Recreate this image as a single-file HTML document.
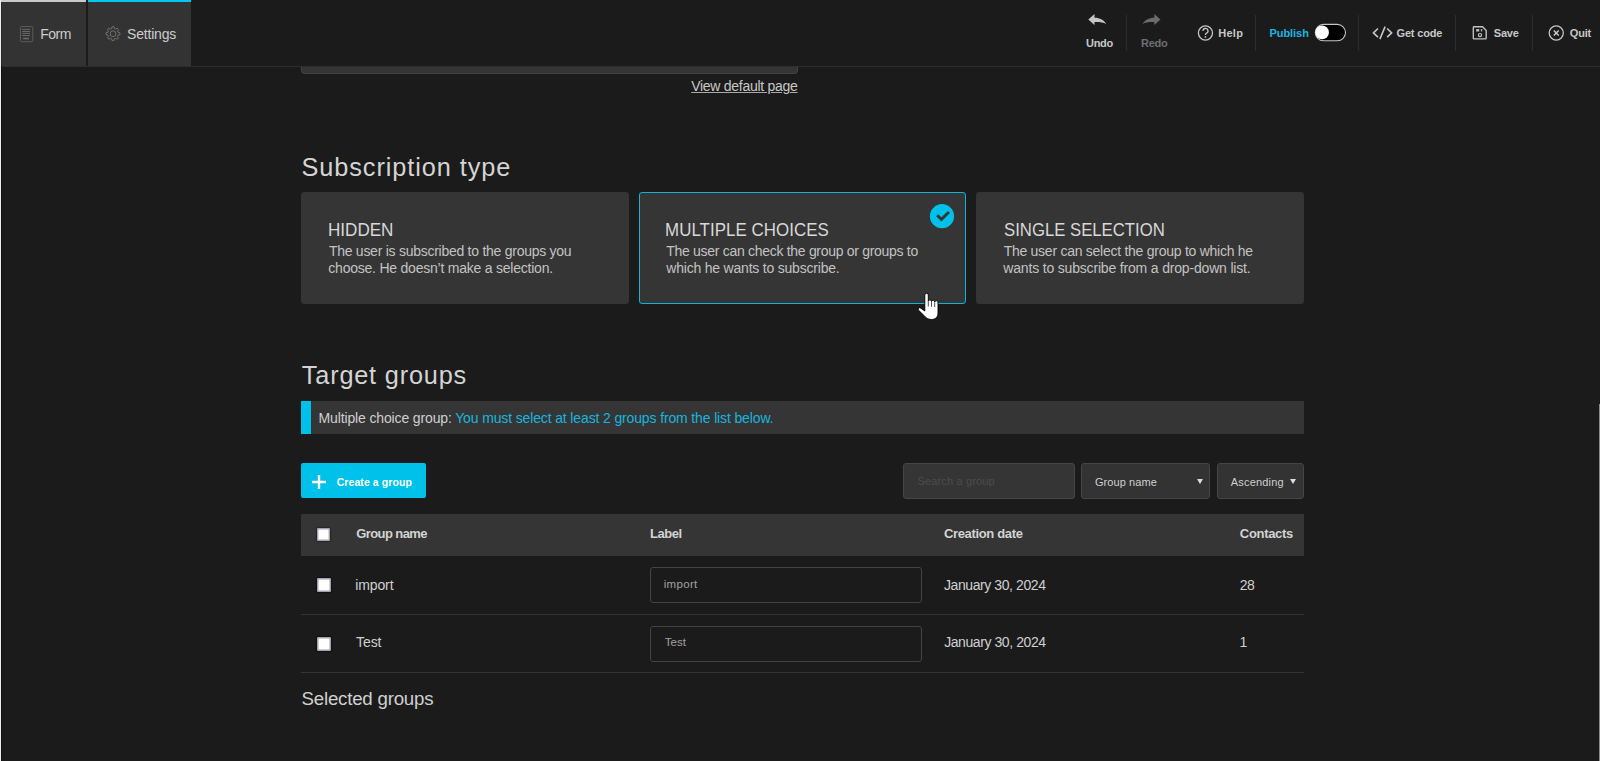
<!DOCTYPE html>
<html><head><meta charset="utf-8">
<style>
*{box-sizing:border-box;margin:0;padding:0}
html,body{width:1600px;height:761px;overflow:hidden;background:#1b1b1b;font-family:"Liberation Sans",sans-serif;color:#cfcfcf}
.a{position:absolute;white-space:nowrap}
</style></head><body>
<div class="a" style="left:0;top:0;width:1600px;height:67px;background:#1b1b1b;border-bottom:1px solid #2e2e2e"></div>
<!-- tabs -->
<div class="a" style="left:1px;top:0;width:85px;height:66px;background:#333;border-top:2px solid #c9c9c9"></div>
<div class="a" style="left:88px;top:0;width:103px;height:66px;background:#333;border-top:2px solid #00c8f0"></div>
<svg class="a" style="left:19px;top:25px" width="15" height="18" viewBox="0 0 15 18"><rect x="1.5" y="1.6" width="12.3" height="15.1" rx="1" fill="none" stroke="#5c5c5c" stroke-width="1"/><path d="M3.2 4.4h7.9M3.2 6.5h7.9M3.2 8.4h7.9M3.2 10.5h7.9" stroke="#6e6e6e" stroke-width="0.9"/><rect x="4.1" y="12.7" width="5.9" height="1.6" fill="#6a6a6a"/></svg>
<svg class="a" style="left:105px;top:26px" width="16" height="16" viewBox="0 0 16 16"><g transform="translate(0,-0.3)"><path d="M6.68 2.87 L7.07 1.06 L8.93 1.06 L9.32 2.87 L10.70 3.44 L12.25 2.44 L13.56 3.75 L12.56 5.30 L13.13 6.68 L14.94 7.07 L14.94 8.93 L13.13 9.32 L12.56 10.70 L13.56 12.25 L12.25 13.56 L10.70 12.56 L9.32 13.13 L8.93 14.94 L7.07 14.94 L6.68 13.13 L5.30 12.56 L3.75 13.56 L2.44 12.25 L3.44 10.70 L2.87 9.32 L1.06 8.93 L1.06 7.07 L2.87 6.68 L3.44 5.30 L2.44 3.75 L3.75 2.44 L5.30 3.44Z" fill="none" stroke="#727272" stroke-width="1" stroke-linejoin="round"/><circle cx="8" cy="8" r="2.9" fill="none" stroke="#727272" stroke-width="1"/></g></svg>
<!-- toolbar -->
<svg class="a" style="left:1084px;top:10px" width="26" height="18" viewBox="1084 10 26 18"><path d="M1088.3 19.6L1094.5 14.1V17.8C1100 17.8 1104 20 1106.4 24.2C1103.5 22.3 1099.5 22 1094.5 22.1V25.1Z" fill="#c6c6c6"/></svg>
<div class="a" style="left:1126px;top:15px;width:1px;height:36px;background:#2c2c2c"></div>
<svg class="a" style="left:1139px;top:10px" width="26" height="18" viewBox="1139 10 26 18"><path d="M1160.5 19.6L1154.3 14.1V17.8C1148.8 17.8 1144.8 20 1142.4 24.2C1145.3 22.3 1149.3 22 1154.3 22.1V25.1Z" fill="#6b6b6b"/></svg>
<svg class="a" style="left:1193px;top:22px" width="24" height="22" viewBox="1193 22 24 22"><circle cx="1205.45" cy="33" r="7.05" fill="none" stroke="#c4c4c4" stroke-width="1.3"/><path d="M1203 31A2.5 2.5 0 1 1 1206.6 33.2C1205.8 33.6 1205.45 34 1205.45 35" fill="none" stroke="#c4c4c4" stroke-width="1.3"/><circle cx="1205.45" cy="36.9" r="0.85" fill="#c4c4c4"/></svg>
<div class="a" style="left:1255px;top:15px;width:1px;height:36px;background:#2c2c2c"></div>
<svg class="a" style="left:1313px;top:23px" width="35" height="20" viewBox="0 0 35 20"><rect x="2.3" y="1.4" width="30.2" height="16.4" rx="8.2" fill="#000" stroke="#c4c4c4" stroke-width="1.1"/><circle cx="9.1" cy="9.4" r="6.8" fill="#fff"/></svg>
<div class="a" style="left:1358px;top:15px;width:1px;height:36px;background:#2c2c2c"></div>
<svg class="a" style="left:1368px;top:22px" width="28" height="22" viewBox="1368 22 28 22"><path d="M1378 28.5L1373.4 32.8L1378 37.2M1387.1 28.5L1391.7 32.8L1387.1 37.2M1385.1 26.6L1379.9 39.1" fill="none" stroke="#c6c6c6" stroke-width="1.6" stroke-linejoin="round"/></svg>
<div class="a" style="left:1455px;top:15px;width:1px;height:36px;background:#2c2c2c"></div>
<svg class="a" style="left:1468px;top:22px" width="24" height="22" viewBox="1468 22 24 22"><path d="M1474 26.7H1482.6L1486.2 30.6V38.2A0.7 0.7 0 0 1 1485.5 38.9H1474A0.7 0.7 0 0 1 1473.3 38.2V27.4A0.7 0.7 0 0 1 1474 26.7Z" fill="none" stroke="#c2c2c2" stroke-width="1.35"/><rect x="1476.2" y="29.1" width="3" height="2.4" fill="#c2c2c2"/><rect x="1480.8" y="29.1" width="1.5" height="2.3" fill="#b0b0b0"/><circle cx="1480" cy="35.1" r="1.6" fill="none" stroke="#c2c2c2" stroke-width="1.2"/></svg>
<div class="a" style="left:1532px;top:15px;width:1px;height:36px;background:#2c2c2c"></div>
<svg class="a" style="left:1544px;top:22px" width="24" height="22" viewBox="1544 22 24 22"><circle cx="1556.25" cy="33" r="7.05" fill="none" stroke="#c4c4c4" stroke-width="1.3"/><path d="M1553.8 30.55L1558.7 35.45M1558.7 30.55L1553.8 35.45" stroke="#c8c8c8" stroke-width="1.5"/></svg>
<!-- edges -->
<div class="a" style="left:0;top:0;width:1px;height:761px;background:#eeeeee"></div>
<div class="a" style="left:1px;top:2px;width:1px;height:64px;background:#2a2a2a"></div><div class="a" style="left:1px;top:66px;width:1px;height:695px;background:#111"></div>
<div class="a" style="left:1599px;top:404px;width:1px;height:357px;background:#8a8a8a"></div>
<!-- top partial box -->
<div class="a" style="left:301px;top:67px;width:497px;height:7px;background:#353535;border:1px solid #424242;border-top:none;border-radius:0 0 4px 4px"></div>
<!-- cards -->
<div class="a" style="left:301px;top:192px;width:328px;height:112px;background:#353535;border-radius:3px"></div>
<div class="a" style="left:639px;top:192px;width:327px;height:112px;background:#353535;border-radius:3px;border:1px solid #10b4d8"></div>
<svg class="a" style="left:926px;top:201px" width="32" height="32" viewBox="0 0 32 32"><circle cx="16" cy="15.2" r="12.1" fill="#00c1ea"/><path d="M11.2 14.2l4.2 4.2 7.6-7.4" fill="none" stroke="#353535" stroke-width="2.9"/></svg>
<div class="a" style="left:976px;top:192px;width:328px;height:112px;background:#353535;border-radius:3px"></div>
<svg class="a" style="left:912px;top:288px" width="32" height="36" viewBox="0 0 32 36"><path d="M12.8 7A1.75 1.75 0 0 1 16.3 7V13.3A1.6 1.6 0 0 1 19.5 13.6A1.6 1.6 0 0 1 22.7 14A1.65 1.65 0 0 1 26 14.8V25C26 29 23.5 31.5 19.5 31.5C16 31.5 14 30 12 27.5L6.6 22.3A1.5 1.5 0 0 1 8.8 20.2L12.8 23Z" fill="#fff" stroke="#000" stroke-width="0.9" stroke-linejoin="round"/><path d="M16.3 13.5V18.5M19.5 13.8V18.8M22.7 14.2V19" stroke="#222" stroke-width="0.8"/></svg>
<!-- info bar -->
<div class="a" style="left:301px;top:401px;width:1003px;height:33px;background:#353535"></div>
<div class="a" style="left:301px;top:401px;width:10px;height:33px;background:#00c1e9"></div>
<!-- buttons -->
<div class="a" style="left:301px;top:463px;width:125px;height:35px;background:#00c1e9;border-radius:2px"></div>
<svg class="a" style="left:312px;top:475px" width="14" height="14" viewBox="0 0 14 14"><path d="M7 0v14M0 7h14" stroke="#fff" stroke-width="2.4"/></svg>
<div class="a" style="left:903px;top:463px;width:172px;height:36px;background:#353535;border:1px solid #454545;border-radius:3px"></div>
<div class="a" style="left:1081px;top:463px;width:129px;height:36px;background:#333;border:1px solid #454545;border-radius:3px"></div>
<svg class="a" style="left:1197px;top:479px" width="6" height="5" viewBox="0 0 6 5"><path d="M0 0h6L3 5z" fill="#ddd"/></svg>
<div class="a" style="left:1217px;top:463px;width:87px;height:36px;background:#333;border:1px solid #454545;border-radius:3px"></div>
<svg class="a" style="left:1290px;top:479px" width="6" height="5" viewBox="0 0 6 5"><path d="M0 0h6L3 5z" fill="#ddd"/></svg>
<!-- table -->
<div class="a" style="left:301px;top:514px;width:1003px;height:42px;background:#353535"></div>
<div class="a" style="left:317px;top:528px;width:13px;height:13px;background:#fff;border-radius:2px;box-shadow:inset 0 0 0 1.4px #a3a1b3,0 0 1px 0.5px #262626"></div>
<div class="a" style="left:301px;top:614px;width:1003px;height:1px;background:#333"></div>
<div class="a" style="left:317px;top:578px;width:14px;height:14px;background:#fff;border-radius:2px;box-shadow:inset 0 0 0 1.5px #a3a1b3,0 0 1px 0.5px #111"></div>
<div class="a" style="left:650px;top:567px;width:272px;height:36px;border:1px solid #444;border-radius:3px"></div>
<div class="a" style="left:301px;top:672px;width:1003px;height:1px;background:#333"></div>
<div class="a" style="left:317px;top:637px;width:14px;height:14px;background:#fff;border-radius:2px;box-shadow:inset 0 0 0 1.5px #a3a1b3,0 0 1px 0.5px #111"></div>
<div class="a" style="left:650px;top:626px;width:272px;height:36px;border:1px solid #444;border-radius:3px"></div>

<div id="form" class="a" style="left:40.16px;top:26.75px;font-size:14px;line-height:1;color:#cdcdcd;font-weight:normal;letter-spacing:-0.48px;">Form</div>
<div id="settings" class="a" style="left:127.0px;top:26.75px;font-size:14px;line-height:1;color:#cdcdcd;font-weight:normal;letter-spacing:-0.18px;">Settings</div>
<div id="undo" class="a" style="left:1086.0px;top:37.99px;font-size:11px;line-height:1;color:#c8c8c8;font-weight:bold;letter-spacing:-0.3px;">Undo</div>
<div id="redo" class="a" style="left:1141.0px;top:37.99px;font-size:11px;line-height:1;color:#6f6f6f;font-weight:bold;letter-spacing:-0.3px;">Redo</div>
<div id="help" class="a" style="left:1218.32px;top:28.49px;font-size:11px;line-height:1;color:#c8c8c8;font-weight:bold;letter-spacing:0.24px;">Help</div>
<div id="publish" class="a" style="left:1269.52px;top:28.49px;font-size:11px;line-height:1;color:#17b8e0;font-weight:bold;letter-spacing:-0.06px;">Publish</div>
<div id="getcode" class="a" style="left:1396.52px;top:28.49px;font-size:11px;line-height:1;color:#c8c8c8;font-weight:bold;letter-spacing:-0.18px;">Get code</div>
<div id="save" class="a" style="left:1493.84px;top:28.49px;font-size:11px;line-height:1;color:#c8c8c8;font-weight:bold;letter-spacing:-0.24px;">Save</div>
<div id="quit" class="a" style="left:1569.84px;top:28.49px;font-size:11px;line-height:1;color:#c8c8c8;font-weight:bold;letter-spacing:-0.18px;">Quit</div>
<div id="view" class="a" style="left:691.16px;top:79.45px;font-size:14px;line-height:1;color:#c8c8c8;font-weight:normal;letter-spacing:-0.27px;text-decoration:underline;text-decoration-color:#a8a8a8">View default page</div>
<div id="subtype" class="a" style="left:301.52px;top:155.08px;font-size:25.3px;line-height:1;color:#d4d4d4;font-weight:normal;letter-spacing:0.922px;">Subscription type</div>
<div id="hidden" class="a" style="left:328.1px;top:220.74px;font-size:18.5px;line-height:1;color:#d8d8d8;font-weight:normal;letter-spacing:-0.027px;transform:scaleX(0.925);transform-origin:0 0">HIDDEN</div>
<div id="hd1" class="a" style="left:328.9px;top:244.25px;font-size:14px;line-height:1;color:#c3c3c3;font-weight:normal;letter-spacing:-0.261px;">The user is subscribed to the groups you</div>
<div id="hd2" class="a" style="left:328.3px;top:261.40px;font-size:14px;line-height:1;color:#c3c3c3;font-weight:normal;letter-spacing:-0.225px;">choose. He doesn’t make a selection.</div>
<div id="multi" class="a" style="left:665.26px;top:220.74px;font-size:18.5px;line-height:1;color:#d8d8d8;font-weight:normal;letter-spacing:0.045px;transform:scaleX(0.914);transform-origin:0 0">MULTIPLE CHOICES</div>
<div id="md1" class="a" style="left:666.3px;top:244.25px;font-size:14px;line-height:1;color:#c3c3c3;font-weight:normal;letter-spacing:-0.297px;">The user can check the group or groups to</div>
<div id="md2" class="a" style="left:666.3px;top:261.40px;font-size:14px;line-height:1;color:#c3c3c3;font-weight:normal;letter-spacing:-0.207px;">which he wants to subscribe.</div>
<div id="single" class="a" style="left:1003.64px;top:220.74px;font-size:18.5px;line-height:1;color:#d8d8d8;font-weight:normal;letter-spacing:0.0px;transform:scaleX(0.904);transform-origin:0 0">SINGLE SELECTION</div>
<div id="sd1" class="a" style="left:1003.64px;top:244.25px;font-size:14px;line-height:1;color:#c3c3c3;font-weight:normal;letter-spacing:-0.261px;">The user can select the group to which he</div>
<div id="sd2" class="a" style="left:1003.32px;top:261.40px;font-size:14px;line-height:1;color:#c3c3c3;font-weight:normal;letter-spacing:-0.176px;">wants to subscribe from a drop-down list.</div>
<div id="target" class="a" style="left:301.84px;top:362.98px;font-size:25.3px;line-height:1;color:#d4d4d4;font-weight:normal;letter-spacing:0.803px;">Target groups</div>
<div id="info" class="a" style="left:318.52px;top:410.75px;font-size:14px;line-height:1;color:#cfcfcf;font-weight:normal;letter-spacing:-0.137px;">Multiple choice group: <span style="color:#17b5df">You must select at least 2 groups from the list below.</span></div>
<div id="create" class="a" style="left:336.66px;top:477.01px;font-size:10.5px;line-height:1;color:#ffffff;font-weight:bold;letter-spacing:0.083px;">Create a group</div>
<div id="search" class="a" style="left:917.5px;top:475.94px;font-size:11px;line-height:1;color:#4c4c4c;font-weight:normal;letter-spacing:0.15px;">Search a group</div>
<div id="gname" class="a" style="left:1094.98px;top:476.89px;font-size:11px;line-height:1;color:#cfcfcf;font-weight:normal;letter-spacing:0.08px;">Group name</div>
<div id="asc" class="a" style="left:1230.82px;top:476.89px;font-size:11px;line-height:1;color:#cfcfcf;font-weight:normal;letter-spacing:0.18px;">Ascending</div>
<div id="thg" class="a" style="left:356.3px;top:526.80px;font-size:13px;line-height:1;color:#d3d3d3;font-weight:bold;letter-spacing:-0.6px;">Group name</div>
<div id="thl" class="a" style="left:650.0px;top:526.80px;font-size:13px;line-height:1;color:#d3d3d3;font-weight:bold;letter-spacing:-0.45px;">Label</div>
<div id="thc" class="a" style="left:943.9px;top:526.80px;font-size:13px;line-height:1;color:#d3d3d3;font-weight:bold;letter-spacing:-0.338px;">Creation date</div>
<div id="tht" class="a" style="left:1239.82px;top:527.20px;font-size:13px;line-height:1;color:#d3d3d3;font-weight:bold;letter-spacing:-0.309px;">Contacts</div>
<div id="r1n" class="a" style="left:355.18px;top:577.95px;font-size:14px;line-height:1;color:#d0d0d0;font-weight:normal;letter-spacing:-0.108px;">import</div>
<div id="r1i" class="a" style="left:663.74px;top:579.17px;font-size:11.5px;line-height:1;color:#a0a0a0;font-weight:normal;letter-spacing:0.306px;">import</div>
<div id="r1d" class="a" style="left:943.98px;top:577.95px;font-size:14px;line-height:1;color:#d0d0d0;font-weight:normal;letter-spacing:-0.414px;">January 30, 2024</div>
<div id="r1c" class="a" style="left:1239.82px;top:578.05px;font-size:14px;line-height:1;color:#d0d0d0;font-weight:normal;letter-spacing:-0.54px;">28</div>
<div id="r2n" class="a" style="left:355.98px;top:634.65px;font-size:14px;line-height:1;color:#d0d0d0;font-weight:normal;letter-spacing:-0.06px;">Test</div>
<div id="r2i" class="a" style="left:664.78px;top:637.27px;font-size:11.5px;line-height:1;color:#a0a0a0;font-weight:normal;letter-spacing:0.06px;">Test</div>
<div id="r2d" class="a" style="left:944.14px;top:634.65px;font-size:14px;line-height:1;color:#d0d0d0;font-weight:normal;letter-spacing:-0.417px;">January 30, 2024</div>
<div id="r2c" class="a" style="left:1239.5px;top:634.65px;font-size:14px;line-height:1;color:#d0d0d0;font-weight:normal;letter-spacing:-3.42px;">1</div>
<div id="selected" class="a" style="left:301.6px;top:689.97px;font-size:18.7px;line-height:1;color:#d0d0d0;font-weight:normal;letter-spacing:-0.225px;">Selected groups</div>
</body></html>
